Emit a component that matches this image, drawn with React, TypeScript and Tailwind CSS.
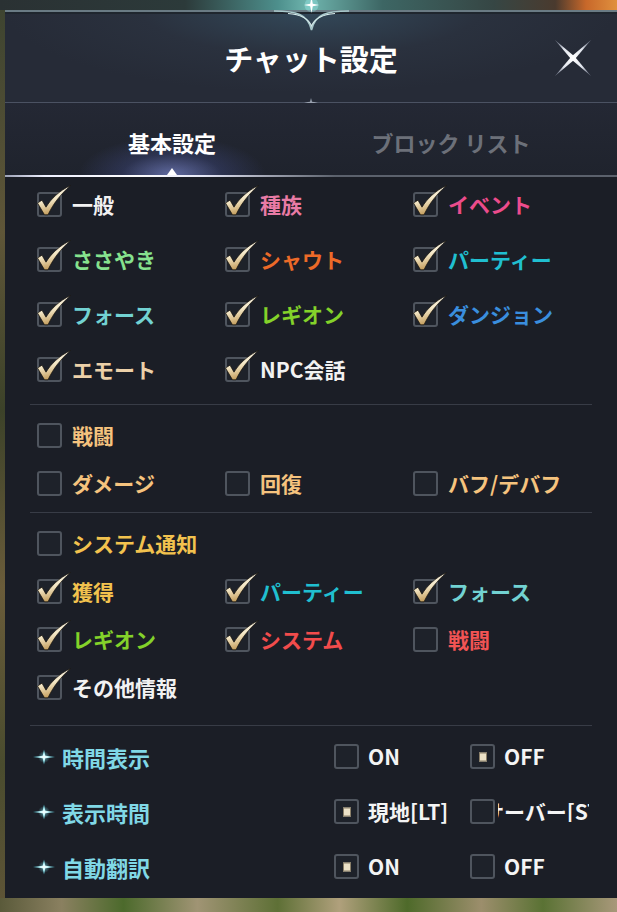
import React from 'react';

type Item = { t: string; c: string; on: boolean };

function Check() {
  return (
    <svg
      className="absolute left-[-4px] top-[-10px] w-[36px] h-[32px] overflow-visible"
      viewBox="-2 -8 36 32"
    >
      <defs>
        <linearGradient id="chk" x1="0" y1="0" x2="0.3" y2="1">
          <stop offset="0" stopColor="#ffffff" />
          <stop offset="0.55" stopColor="#f4e8c8" />
          <stop offset="1" stopColor="#c39c5a" />
        </linearGradient>
      </defs>
      <path
        d="M0.5 11 L5 8.2 L9 15.2 C14 7 22 -1 33.5 -6.5 C24 2 16.5 11 11 22.8 L7.5 22.8 Z"
        fill="url(#chk)"
        stroke="#17130c"
        strokeWidth="0.7"
      />
    </svg>
  );
}

function Box({ on, dot }: { on?: boolean; dot?: boolean }) {
  return (
    <div className="relative w-[25px] h-[25px] shrink-0 rounded-[3px] border-2 border-[#4f555e] bg-[#1e222a]">
      {on && <Check />}
      {dot && (
        <div className="absolute left-1/2 top-1/2 -translate-x-1/2 -translate-y-1/2 w-[8px] h-[9px] bg-[#ece2c8] border border-[#8a7f68]" />
      )}
    </div>
  );
}

function Sparkle() {
  return (
    <svg width="24" height="18" viewBox="0 0 24 18" className="shrink-0">
      <defs>
        <radialGradient id="sp">
          <stop offset="0" stopColor="#ffffff" />
          <stop offset="0.4" stopColor="#b8f4fa" />
          <stop offset="1" stopColor="#3fc6da" />
        </radialGradient>
        <radialGradient id="spg">
          <stop offset="0" stopColor="#7fe6f2" stopOpacity="0.7" />
          <stop offset="1" stopColor="#7fe6f2" stopOpacity="0" />
        </radialGradient>
      </defs>
      <circle cx="12" cy="9" r="6" fill="url(#spg)" />
      <path d="M12 1.5 L13.3 7.7 L23 9 L13.3 10.3 L12 16.5 L10.7 10.3 L1 9 L10.7 7.7 Z" fill="url(#sp)" />
    </svg>
  );
}

function CloseX() {
  return (
    <svg width="36" height="36" viewBox="0 0 36 36">
      <defs>
        <radialGradient id="xg" cx="0.5" cy="0.5" r="0.6">
          <stop offset="0" stopColor="#ffffff" />
          <stop offset="0.6" stopColor="#dfe3ec" />
          <stop offset="1" stopColor="#7a8090" />
        </radialGradient>
      </defs>
      <polygon points="0,0 19.6,16.4 36,36 16.4,19.6" fill="url(#xg)" />
      <polygon points="36,0 19.6,19.6 0,36 16.4,16.4" fill="url(#xg)" />
    </svg>
  );
}

function Cell({ it }: { it: Item }) {
  return (
    <div className="flex items-center gap-[10px] w-[188px]">
      <Box on={it.on} />
      <span className={`text-[21px] font-bold leading-none whitespace-nowrap ${it.c}`}>{it.t}</span>
    </div>
  );
}

const sec1: Item[][] = [
  [
    { t: '一般', c: 'text-[#f2f2f2]', on: true },
    { t: '種族', c: 'text-[#e87ba5]', on: true },
    { t: 'イベント', c: 'text-[#ec4c8c]', on: true },
  ],
  [
    { t: 'ささやき', c: 'text-[#86e28e]', on: true },
    { t: 'シャウト', c: 'text-[#ec6a28]', on: true },
    { t: 'パーティー', c: 'text-[#20bfd0]', on: true },
  ],
  [
    { t: 'フォース', c: 'text-[#72d2d2]', on: true },
    { t: 'レギオン', c: 'text-[#84d22a]', on: true },
    { t: 'ダンジョン', c: 'text-[#3a8ede]', on: true },
  ],
  [
    { t: 'エモート', c: 'text-[#ecd0a8]', on: true },
    { t: 'NPC会話', c: 'text-[#f2f2f2]', on: true },
  ],
];

const sec2: Item[][] = [
  [{ t: '戦闘', c: 'text-[#f5c37e]', on: false }],
  [
    { t: 'ダメージ', c: 'text-[#f5c37e]', on: false },
    { t: '回復', c: 'text-[#f5c37e]', on: false },
    { t: 'バフ/デバフ', c: 'text-[#f5c37e]', on: false },
  ],
];

const sec3: Item[][] = [
  [{ t: 'システム通知', c: 'text-[#f2c24e]', on: false }],
  [
    { t: '獲得', c: 'text-[#f2c24e]', on: true },
    { t: 'パーティー', c: 'text-[#20bfd0]', on: true },
    { t: 'フォース', c: 'text-[#72d2d2]', on: true },
  ],
  [
    { t: 'レギオン', c: 'text-[#84d22a]', on: true },
    { t: 'システム', c: 'text-[#f24c4c]', on: true },
    { t: '戦闘', c: 'text-[#f25454]', on: false },
  ],
  [{ t: 'その他情報', c: 'text-[#f2f2f2]', on: true }],
];

function Rows({ rows, h }: { rows: Item[][]; h: string }) {
  return (
    <div className="flex flex-col pl-[32px]">
      {rows.map((r, i) => (
        <div key={i} className={`flex items-center ${h}`}>
          {r.map((it, j) => (
            <Cell key={j} it={it} />
          ))}
        </div>
      ))}
    </div>
  );
}

function Divider({ mt }: { mt: string }) {
  return <div className={`${mt} mx-[25px] h-[1px] bg-[#383c46]`} />;
}

function OptRow({
  label,
  a,
  b,
  aOn,
  clipB,
}: {
  label: string;
  a: string;
  b: string;
  aOn: boolean;
  clipB?: boolean;
}) {
  return (
    <div className="flex items-center h-[55px]">
      <div className="flex items-center w-[329px] pl-[27px] gap-[6px]">
        <Sparkle />
        <span className="text-[22px] font-bold leading-none text-[#80d8e6]">{label}</span>
      </div>
      <div className="flex items-center w-[136px] gap-[9px]">
        <Box dot={aOn} />
        <span className="text-[21px] font-bold leading-none text-[#f4f4f4] whitespace-nowrap">{a}</span>
      </div>
      <div className="flex items-center">
        <Box dot={!aOn} />
        {clipB ? (
          <div className="ml-[3px] w-[91px] overflow-hidden flex">
            <span className="ml-[-15px] text-[21px] font-bold leading-none text-[#f4f4f4] whitespace-nowrap">
              {b}
            </span>
          </div>
        ) : (
          <span className="ml-[9px] text-[21px] font-bold leading-none text-[#f4f4f4] whitespace-nowrap">{b}</span>
        )}
      </div>
    </div>
  );
}

export default function App() {
  return (
    <div className="w-[617px] h-[912px] overflow-hidden flex flex-col font-['Noto_Sans_CJK_JP','Noto_Sans',sans-serif] bg-[#4d4a33]">
      <div className="h-[10px] shrink-0 bg-[linear-gradient(90deg,#2a3133_0%,#2c3a3a_30%,#4d8f8c_45%,#6fb5ae_50%,#3d6664_62%,#364644_80%,#4a3a2e_90%,#c8682a_95%,#e0903e_100%)]" />
      <div className="flex h-[888px] shrink-0">
        <div className="w-[5px] bg-[linear-gradient(180deg,#3e4430_0%,#5f5638_25%,#3c4229_45%,#6a5c3a_65%,#4a4c2e_85%,#5d5436_100%)]" />
        <div className="relative w-[612px] flex flex-col bg-[#1b1e26]">
          {/* Header */}
          <div className="relative h-[92px] flex flex-col bg-[radial-gradient(ellipse_50%_90%_at_50%_0%,#33495a_0%,#2a313e_55%,#262b37_100%)]">
            <div className="h-[2px] bg-[#6a7b84]" />
            <div className="h-[2px] bg-[#1f262e]" />
            <div className="flex-1 grid grid-cols-[1fr_auto_1fr] items-center">
              <div />
              <div className="text-[29px] font-bold text-white leading-none">チャット設定</div>
              <div className="justify-self-end pr-[26px] flex items-center">
                <CloseX />
              </div>
            </div>
            <svg
              className="absolute left-1/2 -translate-x-1/2 top-[-10px] w-[90px] h-[40px]"
              viewBox="0 0 90 40"
            >
              <circle cx="45.5" cy="5" r="7" fill="#9ef0f0" opacity="0.35" />
              <path
                d="M8 11 C30 11 42 14 45.5 30 C49 14 61 11 83 11"
                fill="none"
                stroke="#a9c9cc"
                strokeWidth="1.6"
              />
              <path
                d="M22 13.5 C36 14.5 43 20 45.5 26 C48 20 55 14.5 69 13.5"
                fill="none"
                stroke="#d8ecec"
                strokeWidth="1.2"
              />
              <path
                d="M45.5 -3 L46.8 3.7 L53 5 L46.8 6.3 L45.5 13 L44.2 6.3 L38 5 L44.2 3.7 Z"
                fill="#ffffff"
              />
            </svg>
          </div>
          {/* header divider */}
          <div className="relative h-[1px] bg-[#4b5262]">
            <svg
              className="absolute left-1/2 -translate-x-1/2 top-[-4px] w-[14px] h-[9px]"
              viewBox="0 0 14 9"
            >
              <path d="M7 0 L8 3.7 L14 4.5 L8 5.3 L7 9 L6 5.3 L0 4.5 L6 3.7 Z" fill="#9aa2b0" />
            </svg>
          </div>
          {/* tabs */}
          <div className="relative h-[72px] flex items-stretch pl-[42px] bg-[linear-gradient(180deg,#242834_0%,#1f232d_100%)]">
            <div className="relative w-[250px] flex items-center justify-center pt-[6px]">
              <div className="absolute bottom-0 left-1/2 -translate-x-1/2 w-[250px] h-[52px] bg-[radial-gradient(ellipse_50%_100%_at_50%_100%,rgba(150,165,255,0.55)_0%,rgba(90,105,200,0.22)_40%,rgba(40,50,100,0)_75%)]" />
              <span className="relative text-[22px] font-bold leading-none text-white">基本設定</span>
              <div className="absolute bottom-0 left-1/2 -translate-x-1/2 w-0 h-0 border-l-[5px] border-r-[5px] border-b-[7px] border-l-transparent border-r-transparent border-b-white" />
            </div>
            <div className="ml-[44px] w-[220px] flex items-center justify-center pt-[6px]">
              <span className="text-[22px] font-bold leading-none text-[#6c7079] whitespace-nowrap">
                ブロック リスト
              </span>
            </div>
          </div>
          <div className="relative h-[2px] bg-[#5b616c]">
            <div className="absolute left-0 top-0 h-full w-[330px] bg-[linear-gradient(90deg,rgba(220,225,255,0.5)_0%,#eef0ff_12%,#ffffff_40%,#e6e8f8_60%,rgba(91,97,108,0)_100%)]" />
          </div>
          {/* content */}
          <Rows rows={sec1} h="h-[55px]" />
          <Divider mt="mt-[7px]" />
          <div className="mt-[6px]">
            <Rows rows={sec2} h="h-[48px]" />
          </div>
          <Divider mt="mt-[5px]" />
          <div className="mt-[6px]">
            <Rows rows={sec3} h="h-[48px]" />
          </div>
          <Divider mt="mt-[14px]" />
          <div className="mt-[3px] flex flex-col">
            <OptRow label="時間表示" a="ON" b="OFF" aOn={false} />
            <OptRow label="表示時間" a="現地[LT]" b="サーバー[ST]" aOn={true} clipB />
            <OptRow label="自動翻訳" a="ON" b="OFF" aOn={true} />
          </div>
        </div>
      </div>
      <div className="flex-1 bg-[linear-gradient(90deg,#5a5a3a_0%,#8a8060_10%,#4c6a2c_20%,#a09474_32%,#5e7036_45%,#b0a07c_55%,#4e6a2a_66%,#9c8e6c_78%,#5a7234_88%,#a8987a_100%)]" />
    </div>
  );
}
